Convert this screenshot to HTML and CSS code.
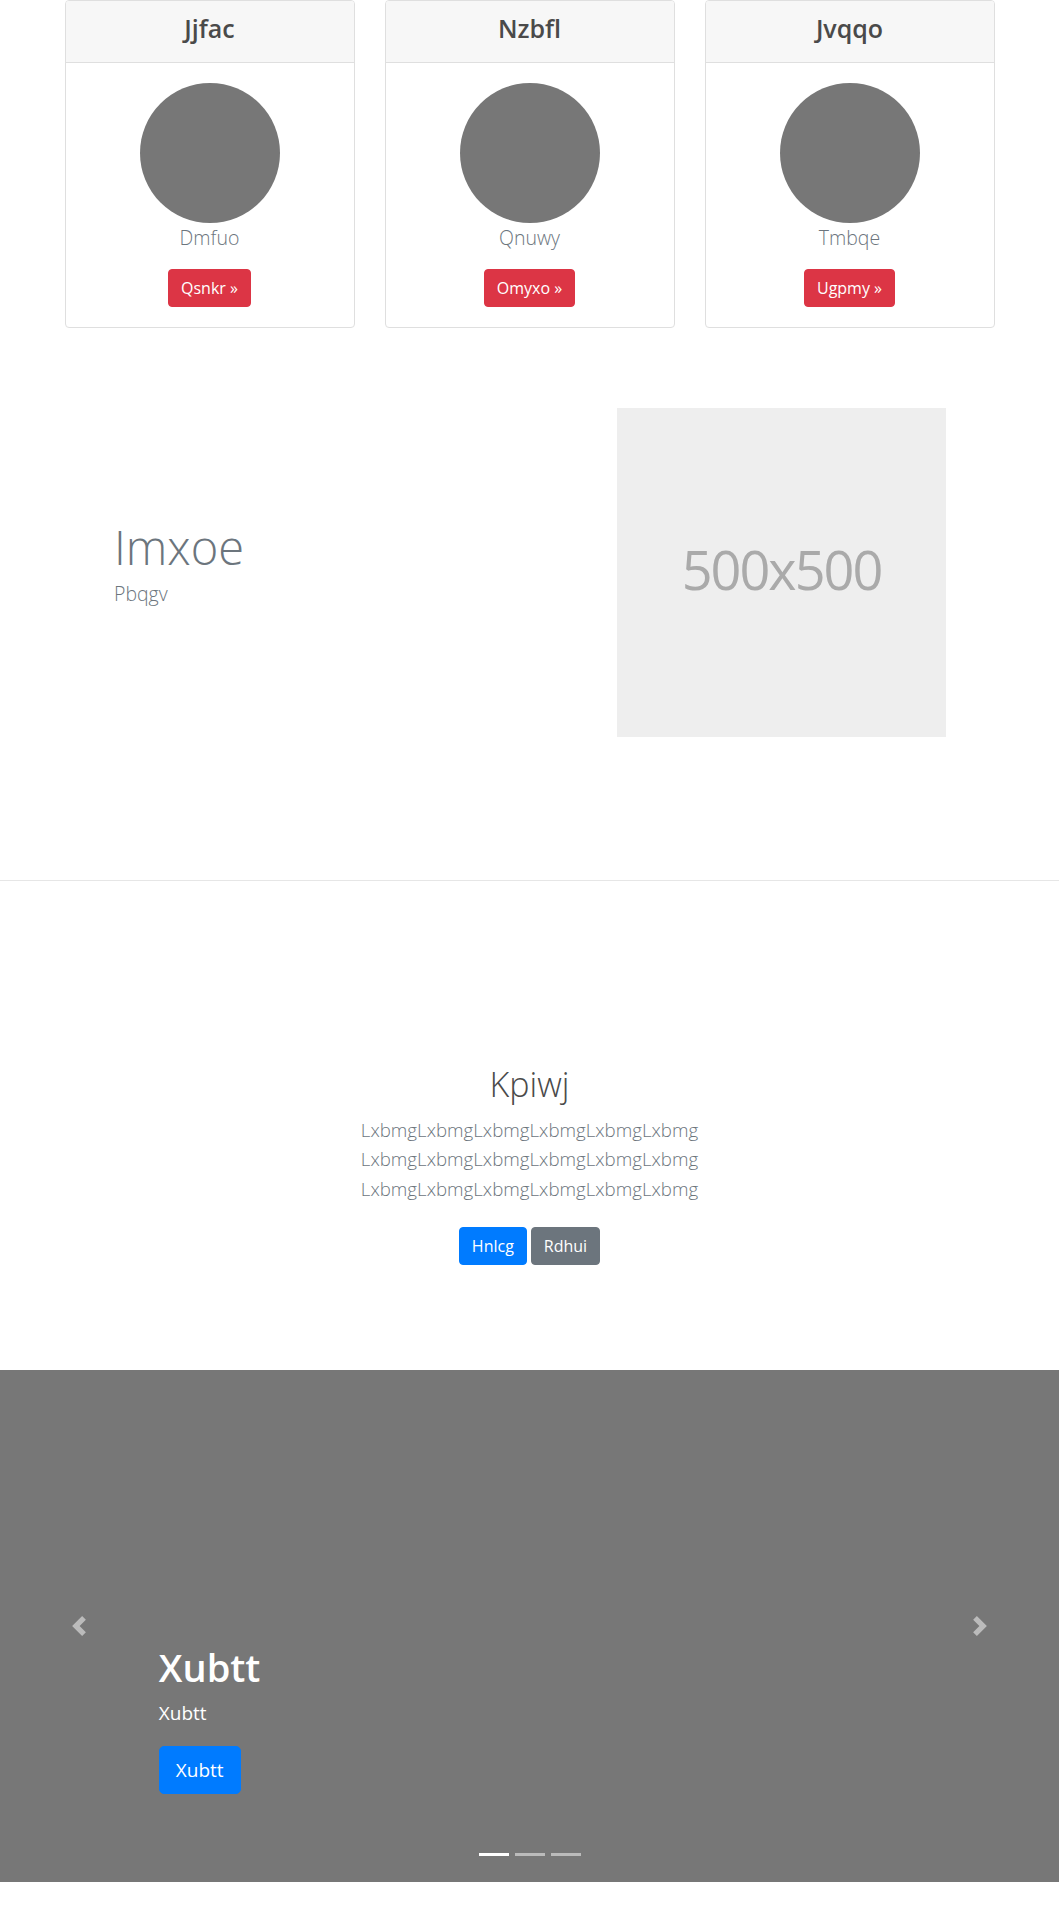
FILE: index.html
```html
<!DOCTYPE html>
<html lang="en">
<head>
<meta charset="utf-8">
<title>Page</title>
<link rel="stylesheet" href="styles.css">
</head>
<body>
<main>
  <section class="pricing">
    <div class="deck">
      <div class="card">
        <div class="card-header"><h4 class="card-title">Jjfac</h4></div>
        <div class="card-body">
          <div class="avatar"></div>
          <p class="card-lead">Dmfuo</p>
          <a class="btn btn-danger" href="#">Qsnkr &raquo;</a>
        </div>
      </div>
      <div class="card">
        <div class="card-header"><h4 class="card-title">Nzbfl</h4></div>
        <div class="card-body">
          <div class="avatar"></div>
          <p class="card-lead">Qnuwy</p>
          <a class="btn btn-danger" href="#">Omyxo &raquo;</a>
        </div>
      </div>
      <div class="card">
        <div class="card-header"><h4 class="card-title">Jvqqo</h4></div>
        <div class="card-body">
          <div class="avatar"></div>
          <p class="card-lead">Tmbqe</p>
          <a class="btn btn-danger" href="#">Ugpmy &raquo;</a>
        </div>
      </div>
    </div>
  </section>

  <section class="feature">
    <div class="feature-text">
      <h1 class="feature-heading">Imxoe</h1>
      <p class="feature-lead">Pbqgv</p>
    </div>
    <div class="placeholder">500x500</div>
  </section>

  <hr class="divider">

  <section class="jumbo">
    <h1 class="jumbo-heading">Kpiwj</h1>
    <p class="jumbo-lead">LxbmgLxbmgLxbmgLxbmgLxbmgLxbmg LxbmgLxbmgLxbmgLxbmgLxbmgLxbmg LxbmgLxbmgLxbmgLxbmgLxbmgLxbmg</p>
    <div class="actions">
      <a class="btn btn-primary" href="#">Hnlcg</a>
      <a class="btn btn-secondary" href="#">Rdhui</a>
    </div>
  </section>

  <section class="carousel">
    <div class="caption">
      <h1 class="caption-title">Xubtt</h1>
      <p class="caption-text">Xubtt</p>
      <div><a class="btn btn-primary btn-lg" href="#">Xubtt</a></div>
    </div>
    <a class="control control-prev" href="#" aria-label="Previous">
      <svg width="20" height="20" viewBox="0 0 8 8" fill="#fff"><path d="M5.25 0l-4 4 4 4 1.5-1.5-2.5-2.5 2.5-2.5-1.5-1.5z"/></svg>
    </a>
    <a class="control control-next" href="#" aria-label="Next">
      <svg width="20" height="20" viewBox="0 0 8 8" fill="#fff"><path d="M2.75 0l-1.5 1.5 2.5 2.5-2.5 2.5 1.5 1.5 4-4-4-4z"/></svg>
    </a>
    <ol class="indicators">
      <li class="active"></li>
      <li></li>
      <li></li>
    </ol>
  </section>
</main>
</body>
</html>
```

FILE: styles.css
```css
* { box-sizing: border-box; }

html, body {
  margin: 0;
  padding: 0;
  background: #fff;
}

body {
  font-family: "Open Sans", "Noto Sans", "Liberation Sans", sans-serif;
  font-size: 16px;
  line-height: 1.5;
  color: #212529;
  width: 1059px;
  height: 1920px;
  overflow: hidden;
}

/* Buttons */
.btn {
  display: inline-block;
  font-size: 16px;
  line-height: 24px;
  padding: 6px 12px;
  border: 1px solid transparent;
  border-radius: 4px;
  color: #fff;
  text-decoration: none;
  font-weight: 400;
}
.btn-danger { background: #dc3545; border-color: #dc3545; }
.btn-primary { background: #007bff; border-color: #007bff; }
.btn-secondary { background: #6c757d; border-color: #6c757d; }
.btn-lg {
  font-size: 19px;
  line-height: 30px;
  padding: 8px 16px;
  border-radius: 5px;
}

/* Pricing cards */
.deck {
  width: 930px;
  margin: 0 auto;
  display: grid;
  grid-template-columns: repeat(3, 1fr);
  gap: 30px;
}
.card {
  border: 1px solid #dfdfdf;
  border-radius: 4px;
  background: #fff;
  text-align: center;
  overflow: hidden;
}
.card-header {
  background: #f7f7f7;
  border-bottom: 1px solid #dfdfdf;
  padding: 13px 20px 12px;
}
.card-title {
  margin: 0 0 8px;
  font-size: 25px;
  line-height: 28px;
  font-weight: 600;
  color: #4a4a4a;
}
.card-body {
  padding: 20px;
  display: flex;
  flex-direction: column;
  align-items: center;
}
.avatar {
  width: 140px;
  height: 140px;
  border-radius: 50%;
  background: #777;
}
.card-lead {
  margin: 0 0 16px;
  font-size: 19.5px;
  line-height: 30px;
  font-weight: 300;
  color: #6c757d;
}

/* Feature row */
.feature {
  display: flex;
  align-items: center;
  padding: 80px 113px 143px 114px;
}
.feature-text {
  flex: 1;
}
.feature-heading {
  margin: 0;
  font-size: 47px;
  line-height: 60px;
  font-weight: 300;
  color: #6c757d;
}
.feature-lead {
  margin: 2px 0 20px;
  font-size: 19.5px;
  line-height: 30px;
  font-weight: 300;
  color: #6c757d;
}
.placeholder {
  width: 329px;
  height: 329px;
  background: #eee;
  color: #aaa;
  display: flex;
  align-items: center;
  justify-content: center;
  font-size: 54px;
  letter-spacing: -2px;
  font-weight: 400;
  padding-bottom: 6px;
}

.divider {
  margin: 0;
  border: 0;
  border-top: 1px solid #e6e6e6;
}

/* Jumbotron */
.jumbo {
  padding: 183px 0 105px;
  text-align: center;
}
.jumbo-heading {
  margin: 0 0 10px;
  font-size: 34px;
  line-height: 41px;
  font-weight: 300;
  color: #4a4a4a;
}
.jumbo-lead {
  width: 460px;
  margin: 0 auto;
  font-size: 18.7px;
  line-height: 29.4px;
  font-weight: 300;
  color: #6c757d;
}
.actions {
  margin-top: 24px;
  display: flex;
  justify-content: center;
  gap: 4px;
}

/* Carousel */
.carousel {
  position: relative;
  height: 512px;
  background: #777;
  display: flex;
  flex-direction: column;
  justify-content: flex-end;
  padding: 0 15% 88px;
}
.caption {
  color: #fff;
  text-align: left;
}
.caption-title {
  margin: 0 0 10px;
  font-size: 38px;
  line-height: 46px;
  font-weight: 600;
}
.caption-text {
  margin: 0 0 19px;
  font-size: 19px;
  line-height: 27px;
}
.control {
  position: absolute;
  top: 0;
  bottom: 0;
  width: 15%;
  display: flex;
  align-items: center;
  justify-content: center;
  opacity: 0.5;
}
.control-prev { left: 0; }
.control-next { right: 0; }
.indicators {
  position: absolute;
  left: 0;
  right: 0;
  bottom: 26px;
  margin: 0;
  padding: 0;
  list-style: none;
  display: flex;
  justify-content: center;
  gap: 6px;
}
.indicators li {
  width: 30px;
  height: 3px;
  background: rgba(255, 255, 255, 0.5);
}
.indicators li.active {
  background: #fff;
}
```
